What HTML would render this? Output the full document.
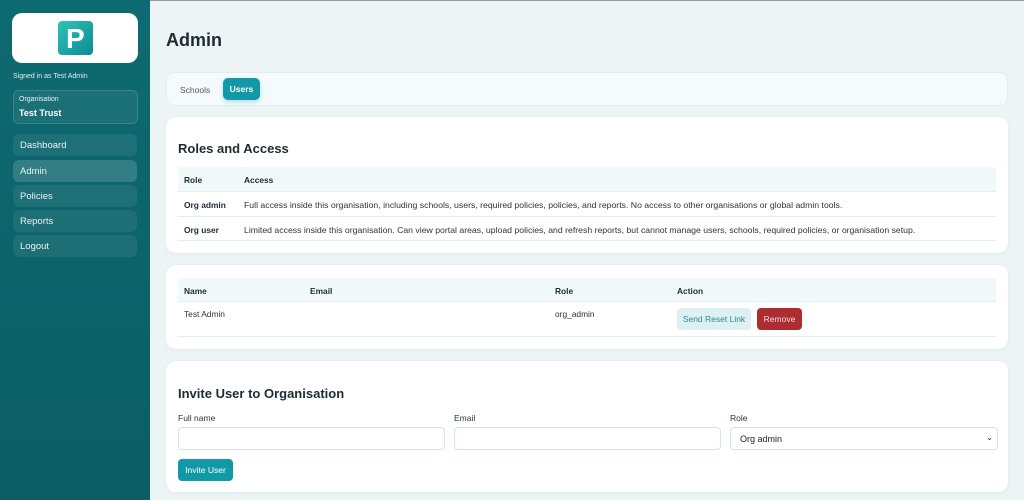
<!DOCTYPE html>
<html><head><style>
*{box-sizing:border-box;margin:0;padding:0}
body{width:1024px;height:500px;overflow:hidden;font-family:"Liberation Sans",sans-serif;background:#edf4f6;position:relative;color:#1d2b33}
.a{position:absolute}
.side{left:0;top:0;width:150px;height:500px;background:linear-gradient(180deg,#0e6a72,#0b5d64)}
.nav{left:13px;width:124px;height:22px;border-radius:6px;background:rgba(255,255,255,.07);color:#e6f2f3;font-size:9.5px;padding:6px 0 0 7px}
.card{left:166px;width:842px;background:#fff;border-radius:10px;box-shadow:0 1px 4px rgba(0,60,70,.06)}
.row{position:absolute;left:12px;right:12px;font-size:8.4px;border-bottom:1px solid #e6eef0}
.th{background:#f2f9fa;font-weight:bold}
.in{position:absolute;height:23px;border:1px solid #d5e2e6;border-radius:4px;background:#fff}
.lbl{position:absolute;font-size:8.5px;color:#333}
</style></head><body>
<div class="a" style="left:0;top:0;width:1024px;height:1px;background:#999"></div>
<div class="a side"></div>
<div class="a" style="left:12px;top:13px;width:126px;height:50px;background:#fff;border-radius:10px"></div>
<div class="a" style="left:58px;top:21px;width:35px;height:34px;border-radius:4px;background:linear-gradient(135deg,#2ec4b6,#0b8a96)"></div>
<div class="a" style="left:66px;top:25px;color:#fff;font-weight:bold;font-size:28px;line-height:28px">P</div>
<div class="a" style="left:13px;top:73px;font-size:7px;color:#dfeeee">Signed in as Test Admin</div>
<div class="a" style="left:13px;top:90px;width:125px;height:34px;border:1px solid rgba(255,255,255,.15);border-radius:6px;background:rgba(255,255,255,.06)"></div>
<div class="a" style="left:19px;top:96px;font-size:7px;color:#e6f2f3">Organisation</div>
<div class="a" style="left:19px;top:108px;font-size:9px;color:#fff;font-weight:bold">Test Trust</div>
<div class="a nav" style="top:134px">Dashboard</div>
<div class="a nav" style="top:160px;background:rgba(255,255,255,.16)">Admin</div>
<div class="a nav" style="top:185px">Policies</div>
<div class="a nav" style="top:210px">Reports</div>
<div class="a nav" style="top:235px">Logout</div>

<div class="a" style="left:166px;top:30px;font-size:18px;font-weight:bold;color:#1d2b33">Admin</div>
<div class="a" style="left:166px;top:72px;width:842px;height:34px;background:#f5fbfc;border:1px solid #e3eef0;border-radius:8px"></div>
<div class="a" style="left:180px;top:85px;font-size:8.5px;color:#555">Schools</div>
<div class="a" style="left:223px;top:78px;width:37px;height:22px;background:#1199a8;border-radius:5px;color:#fff;font-size:8.5px;font-weight:bold;padding-top:6px;text-align:center;box-shadow:0 2px 5px rgba(17,153,168,.3)">Users</div>

<div class="a card" style="top:117px;height:136px">
<div class="a" style="left:12px;top:24px;font-size:13px;font-weight:bold">Roles and Access</div>
<div class="row th" style="top:50px;height:25px"><span class="a" style="left:6px;top:8px">Role</span><span class="a" style="left:66px;top:8px">Access</span></div>
<div class="row" style="top:75px;height:25px"><b class="a" style="left:6px;top:8px">Org admin</b><span class="a" style="left:66px;top:8px;color:#333;font-size:8.7px">Full access inside this organisation, including schools, users, required policies, policies, and reports. No access to other organisations or global admin tools.</span></div>
<div class="row" style="top:100px;height:24px"><b class="a" style="left:6px;top:8px">Org user</b><span class="a" style="left:66px;top:8px;color:#333;font-size:8.7px">Limited access inside this organisation. Can view portal areas, upload policies, and refresh reports, but cannot manage users, schools, required policies, or organisation setup.</span></div>
</div>

<div class="a card" style="top:265px;height:84px">
<div class="row th" style="top:13px;height:24px"><span class="a" style="left:6px;top:8px">Name</span><span class="a" style="left:132px;top:8px">Email</span><span class="a" style="left:377px;top:8px">Role</span><span class="a" style="left:499px;top:8px">Action</span></div>
<div class="row" style="top:37px;height:35px;color:#333"><span class="a" style="left:6px;top:7px">Test Admin</span><span class="a" style="left:377px;top:7px">org_admin</span></div>
<div class="a" style="left:511px;top:43px;width:74px;height:22px;background:#dff0f3;border-radius:4px;color:#2a8a94;font-size:8.5px;text-align:center;padding-top:6px">Send Reset Link</div>
<div class="a" style="left:591px;top:43px;width:45px;height:22px;background:#ad2c31;border-radius:4px;color:#f5dede;font-size:8.5px;text-align:center;padding-top:6px">Remove</div>
</div>

<div class="a card" style="top:361px;height:131px">
<div class="a" style="left:12px;top:25px;font-size:13px;font-weight:bold">Invite User to Organisation</div>
<div class="lbl" style="left:12px;top:52px">Full name</div>
<div class="lbl" style="left:288px;top:52px">Email</div>
<div class="lbl" style="left:564px;top:52px">Role</div>
<div class="in" style="left:12px;top:66px;width:267px"></div>
<div class="in" style="left:288px;top:66px;width:267px"></div>
<div class="in" style="left:564px;top:66px;width:268px;font-size:9px;padding:6px 0 0 9px;color:#222">Org admin<span class="a" style="right:4px;top:5px;font-size:8px">⌄</span></div>
<div class="a" style="left:12px;top:98px;width:55px;height:22px;background:#1199a8;border-radius:4px;color:#fff;font-size:8.5px;text-align:center;padding-top:6px">Invite User</div>
</div>
</body></html>
